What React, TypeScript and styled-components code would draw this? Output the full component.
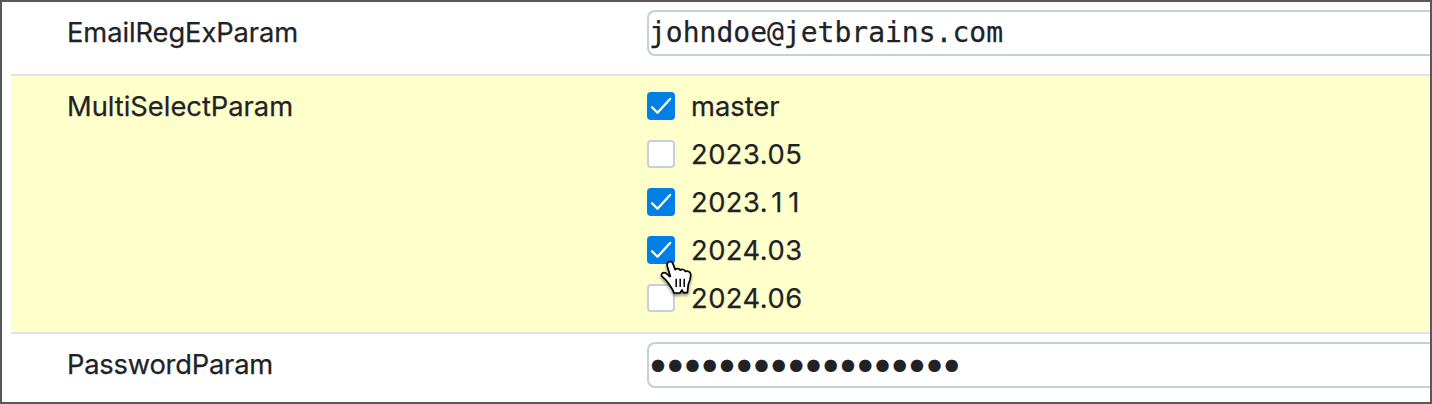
import React from 'react';
import styled, { createGlobalStyle } from 'styled-components';

const GlobalStyle = createGlobalStyle`
  * { box-sizing: border-box; }
  body { margin: 0; background: #fff; }
`;

const Frame = styled.main`
  position: relative;
  width: 1432px;
  height: 404px;
  padding-left: 9px;
  border: 2px solid #595757;
  background: #fff;
  overflow: hidden;
  color: #1f2326;
  font: 400 27.3px/36px Inter, 'Liberation Sans', sans-serif;
  -webkit-text-stroke: 0.25px #1f2326;
`;

const Row = styled.section<{ $height: number; $active?: boolean }>`
  display: grid;
  grid-template-columns: 580px 1fr;
  height: ${p => p.$height}px;
  padding: 8px 0 0 56px;
  border-bottom: 2px solid #dfe5eb;
  background: ${p => (p.$active ? '#ffffcc' : '#fff')};
`;

const Label = styled.div<{ $spacing: number }>`
  padding-top: 5px;
  letter-spacing: ${p => p.$spacing}px;
`;

const Field = styled.div`
  display: flex;
  align-items: center;
  height: 46px;
  border: 2px solid #c3d1db;
  border-right: 0;
  border-radius: 8px 0 0 8px;
  background: #fff;
  white-space: pre;
  font: 28px/42px 'DejaVu Sans Mono', monospace;
`;

const Mask = styled.span`
  padding-left: 1.9px;
  font: 16px/42px 'DejaVu Sans', sans-serif;
  letter-spacing: 3.32px;
`;

const Options = styled.div`
  display: flex;
  flex-direction: column;
  gap: 12px;
  padding-top: 4px;
`;

const Option = styled.div`
  display: flex;
  align-items: center;
  gap: 16px;
  height: 36px;
`;

const OptionName = styled.span<{ $spacing: number }>`
  padding-top: 2px;
  letter-spacing: ${p => p.$spacing}px;
`;

const Ones = styled.span`
  margin-left: 3px;
  letter-spacing: 6px;
`;

const Box = styled.span<{ $checked: boolean }>`
  display: flex;
  width: 28px;
  height: 28px;
  border: ${p => (p.$checked ? '0' : '2px solid #c3d1e0')};
  border-radius: 4px;
  background: ${p => (p.$checked ? '#0080e5' : '#fff')};
`;

const Cursor = styled.svg`
  position: absolute;
  left: 653px;
  top: 253px;
  overflow: visible;
  filter: drop-shadow(0 2px 1.5px rgba(0, 0, 0, 0.45));
`;

const options = [
  { name: 'master', checked: true, spacing: 0 },
  { name: '2023.05', checked: false, spacing: 0.5 },
  { name: '2023.', ones: '11', checked: true, spacing: 0.5 },
  { name: '2024.03', checked: true, spacing: 0.5 },
  { name: '2024.06', checked: false, spacing: 0.5 },
];

function Checkbox({ checked }: { checked: boolean }) {
  return (
    <Box $checked={checked} role="checkbox" aria-checked={checked}>
      {checked && (
        <svg width="28" height="28" viewBox="0 0 28 28" fill="none" stroke="#fff" strokeWidth="2.3" strokeLinecap="round" strokeLinejoin="round">
          <path d="M5 15.2 10.5 20.8 23.1 6.9" />
        </svg>
      )}
    </Box>
  );
}

export default function App() {
  return (
    <Frame>
      <GlobalStyle />
      <Row $height={74}>
        <Label $spacing={-0.08}>EmailRegExParam</Label>
        <Field>johndoe@jetbrains.com</Field>
      </Row>
      <Row $height={258} $active>
        <Label $spacing={0}>MultiSelectParam</Label>
        <Options>
          {options.map(o => (
            <Option key={o.name}>
              <Checkbox checked={o.checked} />
              <OptionName $spacing={o.spacing}>
                {o.name}
                {o.ones && <Ones>{o.ones}</Ones>}
              </OptionName>
            </Option>
          ))}
        </Options>
      </Row>
      <Row $height={74}>
        <Label $spacing={-0.2}>PasswordParam</Label>
        <Field><Mask>{'●'.repeat(18)}</Mask></Field>
      </Row>
      <Cursor width="40" height="42" viewBox="0 0 40 42">
        <path
          d="M15.4 21.5 12.3 11.2C11.2 6.3 16.4 5 17.9 8.6L20.2 14.6C21.4 13 24.5 13.3 25.2 15.2C26.6 13.9 29.7 14.3 30.3 16.5C32.4 15.3 35.4 16.8 35.7 19.3C36 23 34.8 26 33.3 29.5L32.4 37.6H28.3L27 35L25 38H19C18.4 34.9 16.6 32.9 14.6 30.1C12.6 27.2 11.6 24.7 7.8 22.1C4.9 19.8 7.4 16.7 10.6 18Q12.4 19 14.4 21.4Z"
          fill="#fff" stroke="#000" strokeWidth="1.7" strokeLinejoin="round"
        />
        <path d="M21.2 23.7V32M25.2 23.7V32M29.2 23.7V32" stroke="#000" strokeWidth="1.5" />
      </Cursor>
    </Frame>
  );
}
